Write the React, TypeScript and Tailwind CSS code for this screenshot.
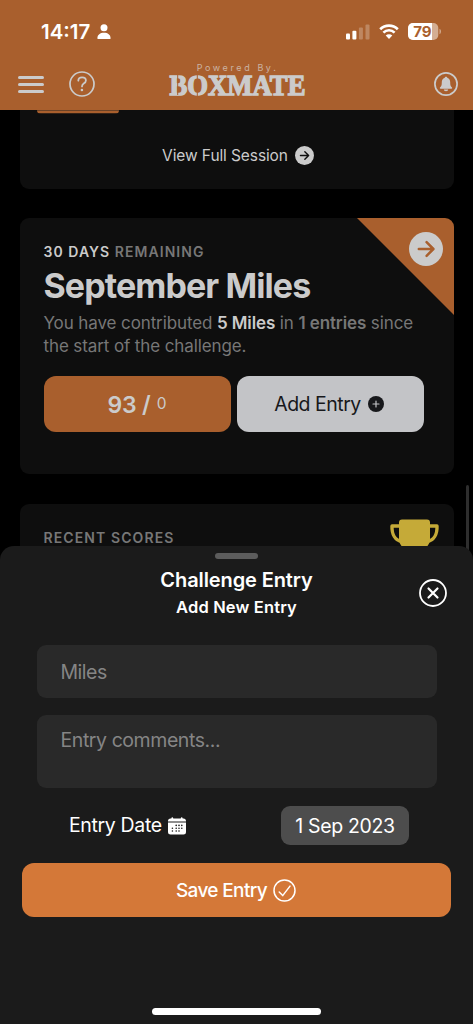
import type { ReactNode } from 'react';

function PersonIcon() {
  return (
    <svg width="14" height="16" viewBox="0 0 14 16" fill="#fff">
      <circle cx="7" cy="3.8" r="3.5" />
      <path d="M.4 14.2c0-3.4 2.8-5.4 6.6-5.4s6.6 2 6.6 5.4c0 .6-.4.9-1 .9H1.400c-.6 0-1-.3-1-.9z" />
    </svg>
  );
}

function SignalIcon() {
  return (
    <svg width="24" height="16" viewBox="0 0 24 16" fill="#fff">
      <rect x="0" y="9.500" width="4" height="6" rx="1" />
      <rect x="6.400" y="6.800" width="4" height="8.700" rx="1" />
      <rect x="12.900" y="3.600" width="4" height="11.900" rx="1" opacity=".25" />
      <rect x="19.500" y=".5" width="4" height="15" rx="1" opacity=".25" />
    </svg>
  );
}

function WifiIcon() {
  return (
    <svg width="20" height="15" viewBox="0 0 20 15" fill="none">
      <path d="M1.200 5.200a12.600 12.600 0 0 1 17.600 0" stroke="#fff" strokeWidth="2.700" />
      <path d="M4.400 8.600a8 8 0 0 1 11.200 0" stroke="#fff" strokeWidth="2.600" />
      <path d="M10 15l-3.300-3.400a4.700 4.700 0 0 1 6.600 0z" fill="#fff" />
    </svg>
  );
}

function BatteryIcon() {
  return (
    <svg width="34" height="17" viewBox="0 0 34 17">
      <clipPath id="battery">
        <rect width="30.300" height="17" rx="5" />
      </clipPath>
      <g clipPath="url(#battery)">
        <rect width="31" height="17" fill="#d4ae93" />
        <rect width="24" height="17" fill="#fff" />
      </g>
      <path d="M31.500 5.800c1.900.6 1.900 4.800 0 5.400z" fill="#d4ae93" />
      <text x="5.200" y="13.700" fontFamily="Inter, sans-serif" fontSize="14.500" fontWeight="700" textLength="18.500" lengthAdjust="spacingAndGlyphs" fill="#a95f2d">
        79
      </text>
    </svg>
  );
}

function HelpIcon() {
  return (
    <svg width="26" height="26" viewBox="0 0 26 26" fill="none" stroke="#cbcbcb" strokeLinecap="round">
      <circle cx="13" cy="13" r="12" strokeWidth="1.700" />
      <path d="M9.300 9.600c.1-2.100 1.600-3.300 3.800-3.300 2.200 0 3.800 1.200 3.800 3.100 0 1.500-.8 2.200-2.200 3.100-1.300.9-1.700 1.500-1.700 2.900" strokeWidth="1.800" />
      <circle cx="12.900" cy="19" r="1.300" fill="#cbcbcb" stroke="none" />
    </svg>
  );
}

function BellIcon() {
  return (
    <svg width="24" height="24" viewBox="0 0 24 24" fill="#cbcbcb">
      <circle cx="12" cy="12" r="11.100" fill="none" stroke="#cbcbcb" strokeWidth="1.700" />
      <path d="M12 4.700c-.8 0-1.200.5-1.300 1.100-2 .7-2.900 2.300-2.900 4.500 0 3-.4 3.800-1.600 5-.7.700-.4 1.500.4 1.500h10.800c.8 0 1.100-.8.400-1.500-1.200-1.200-1.600-2-1.600-5 0-2.200-.9-3.800-2.900-4.500-.1-.6-.5-1.100-1.300-1.100z" />
      <path d="M9.800 17.500a2.200 1.700 0 0 0 4.400 0z" />
    </svg>
  );
}

function Logo() {
  return (
    <svg className="overflow-visible" width="138" height="24" viewBox="0 0 138 24">
      <text x=".5" y="21.800" fontFamily="'Liberation Serif', serif" fontSize="30" fontWeight="700" textLength="136" lengthAdjust="spacingAndGlyphs" fill="#cbcbcb" stroke="#cbcbcb" strokeWidth="1.400">
        BOXMATE
      </text>
      {/* stencil bridges */}
      <path d="M8.700 1v21M28.300 0v23M92 15v9" stroke="#a95f2d" strokeWidth="1" />
    </svg>
  );
}

function ArrowCircle({ size, arrow }: { size: number; arrow: string }) {
  return (
    <svg width={size} height={size} viewBox="0 0 34 34" fill="none">
      <circle cx="17" cy="17" r="17" fill="#cbcbcb" />
      <path d="M9.800 17h14.400M17.600 10.200l6.800 6.800-6.800 6.800" stroke={arrow} strokeWidth="2.500" strokeLinecap="round" strokeLinejoin="round" />
    </svg>
  );
}

function PlusCircle() {
  return (
    <svg width="16" height="16" viewBox="0 0 16 16">
      <circle cx="8" cy="8" r="8" fill="#17181b" />
      <path d="M8 5v6M5 8h6" stroke="#c3c4c7" strokeWidth="1.200" strokeLinecap="round" />
    </svg>
  );
}

function TrophyIcon() {
  return (
    <svg width="49" height="44" viewBox="0 0 49 44" fill="none">
      <path d="M9.500 7H2c-.3 8 3 14.500 10 15.500M39.500 7H47c.3 8-3 14.500-10 15.500" stroke="#c5aa38" strokeWidth="3.400" strokeLinejoin="round" />
      <path d="M12 .5h25a3 3 0 0 1 3 3V20c0 6-5 12-15.500 12S9 26 9 20V3.500a3 3 0 0 1 3-3z" fill="#c5aa38" />
    </svg>
  );
}

function CloseIcon() {
  return (
    <svg width="28" height="28" viewBox="0 0 28 28" fill="none" stroke="#fff" strokeLinecap="round">
      <circle cx="14" cy="14" r="13" strokeWidth="1.800" />
      <path d="M9.500 9.500l9 9M18.500 9.500l-9 9" strokeWidth="2.200" />
    </svg>
  );
}

function CalendarIcon() {
  const dots = [
    [8.2, 8.4], [11, 8.4], [13.8, 8.4],
    [4.4, 11.2], [8.2, 11.2], [11, 11.2], [13.8, 11.2],
    [4.4, 14], [8.2, 14], [11, 14],
  ];
  return (
    <svg width="18" height="18" viewBox="0 0 18 18" fill="#fff">
      <path d="M0 4.400V4c0-1.500 1-2.500 2.500-2.500h.8C3.400.700 3.800.300 4.300.300s.9.400 1 1.200h7.400c.1-.8.500-1.200 1-1.200s.9.400 1 1.200h.8C17 1.500 18 2.500 18 4v.400z" />
      <path d="M0 5.500h18V15c0 1.700-1 2.500-2.500 2.500h-13C1 17.500 0 16.700 0 15z" />
      {dots.map(([x, y]) => (
        <circle key={`${x}-${y}`} cx={x} cy={y} r=".8" fill="#1b1b1b" />
      ))}
    </svg>
  );
}

function CheckIcon() {
  return (
    <svg width="23" height="23" viewBox="0 0 23 23" fill="none" stroke="#fff" strokeLinecap="round" strokeLinejoin="round">
      <circle cx="11.500" cy="11.500" r="10.500" strokeWidth="1.500" />
      <path d="M6.200 13l3.500 3.600 7.300-9.500" strokeWidth="1.500" />
    </svg>
  );
}

function Header() {
  return (
    <header className="h-[110px] bg-[#a95f2d]">
      <div className="flex h-[62px] items-center pt-px pr-[31px] pl-[41px]">
        <span className="w-[50px] pt-px text-[20.5px] font-semibold whitespace-nowrap text-white">14:17</span>
        <div className="ml-[6px]">
          <PersonIcon />
        </div>
        <div className="ml-auto flex items-center">
          <SignalIcon />
          <div className="ml-[9px]">
            <WifiIcon />
          </div>
          <div className="ml-[9px]">
            <BatteryIcon />
          </div>
        </div>
      </div>
      <div className="flex h-11 items-center justify-between pr-[15.5px] pl-[17.5px]">
        <div className="flex w-[140px] items-center">
          <div className="flex w-[26px] flex-col gap-1">
            <div className="h-[3px] rounded-full bg-[#cbcbcb]" />
            <div className="h-[3px] rounded-full bg-[#cbcbcb]" />
            <div className="h-[3px] rounded-full bg-[#cbcbcb]" />
          </div>
          <div className="ml-[25px]">
            <HelpIcon />
          </div>
        </div>
        <div className="flex flex-col items-center pb-[9px]">
          <span className="text-[9px] leading-[11px] tracking-[2.6px] whitespace-nowrap text-[#cbb3a3]">Powered By.</span>
          <Logo />
        </div>
        <div className="flex w-[140px] justify-end">
          <BellIcon />
        </div>
      </div>
    </header>
  );
}

function Card({ className, children }: { className: string; children: ReactNode }) {
  return <section className={`mx-[19.5px] overflow-hidden bg-[#0e0e0e] ${className}`}>{children}</section>;
}

function ChallengeCard() {
  return (
    <Card className="relative mt-[29px] h-[256px] rounded-[9px] px-6 pt-[23px]">
      <svg className="absolute top-0 right-0" width="97" height="97" viewBox="0 0 97 97">
        <path d="M0 0h97v97z" fill="#a95f2d" />
      </svg>
      <div className="absolute top-[14px] right-[11px]">
        <ArrowCircle size={34} arrow="#a95f2d" />
      </div>
      <p className="text-sm leading-[22px] font-semibold tracking-[1.05px] whitespace-nowrap text-[#777]">
        <span className="text-[#cbcbcb]">30 DAYS</span> REMAINING
      </p>
      <h1 className="mt-[2px] text-[34px] leading-[42px] font-bold tracking-[-0.9px] whitespace-nowrap text-[#cbcbcb]">September Miles</h1>
      <p className="mt-[5px] text-[17px] leading-[23px] tracking-[-0.11px] whitespace-nowrap text-[#777]">
        You have contributed <b className="font-semibold text-[#cbcbcb]">5 Miles</b> in <b className="font-semibold">1 entries</b> since
        <br />
        the start of the challenge.
      </p>
      <div className="mt-[18px] flex gap-[6px]">
        <div className="flex h-14 w-[187px] items-center justify-center rounded-xl bg-[#a95f2d] text-[#cbcbcb]">
          <span className="pt-[3px] text-[23px] font-semibold tracking-[-0.2px]">93 /</span>
          <span className="ml-[6px] text-[15.5px]">0</span>
        </div>
        <button className="flex h-14 w-[187px] items-center justify-center gap-[7px] rounded-xl bg-[#c3c4c7] pr-[2px] text-[19.5px] text-[#17181b]">
          <span className="pt-[2px] tracking-[-0.5px]">Add Entry</span>
          <PlusCircle />
        </button>
      </div>
    </Card>
  );
}

function EntrySheet() {
  return (
    <div className="absolute inset-x-0 top-[546px] bottom-0 flex flex-col rounded-t-[14px] bg-[#1b1b1b] text-white">
      <div className="mx-auto mt-[6.500px] h-[6px] w-[43px] rounded-full bg-[#5c5c5c]" />
      <div className="relative mt-[8.500px] text-center">
        <h2 className="text-xl leading-[26px] font-semibold tracking-[-0.1px]">Challenge Entry</h2>
        <h3 className="mt-px mb-px text-[16.5px] leading-[26px] font-semibold tracking-[0.15px]">Add New Entry</h3>
        <button className="absolute top-[12px] right-[26px]">
          <CloseIcon />
        </button>
      </div>
      <div className="mx-[36.500px] mt-[24px] flex flex-col gap-[17px]">
        <input className="h-[53px] rounded-[9px] bg-[#292929] px-6 text-[19.500px] tracking-[-0.5px] outline-none placeholder:text-[#858585]" placeholder="Miles" />
        <textarea className="h-[73px] resize-none rounded-[9px] bg-[#292929] px-6 pt-[11px] text-[19.500px] leading-7 tracking-[-0.43px] outline-none placeholder:text-[#858585]" placeholder="Entry comments..." />
      </div>
      <div className="mt-[18px] mr-16 ml-[69px] flex items-center justify-between">
        <div className="flex items-center gap-[6px] text-[19.500px] tracking-[-0.35px] whitespace-nowrap">
          Entry Date
          <CalendarIcon />
        </div>
        <div className="flex h-[39px] w-32 items-center justify-center rounded-[9px] bg-[#4d4d4d] pt-[2px] text-[19.500px] tracking-[-0.35px] whitespace-nowrap">1 Sep 2023</div>
      </div>
      <button className="mx-[22px] mt-[18px] flex h-[54px] items-center justify-center gap-[6px] rounded-xl bg-[#d47838] pr-px text-[19px] font-medium">
        <span className="pt-[3px] tracking-[-0.65px]">Save Entry</span>
        <CheckIcon />
      </button>
      <div className="mx-auto mt-auto mb-[9.500px] h-[6.500px] w-[169px] rounded-full bg-white" />
    </div>
  );
}

export default function App() {
  return (
    <div className="relative h-[1024px] w-[473px] overflow-hidden bg-black font-['Inter',sans-serif]">
      <Header />
      <Card className="h-[79px] rounded-b-[9px]">
        <div className="ml-[17.500px] h-[3.500px] w-[82px] rounded-b-[10px] border-t border-[#6b4226] bg-[#a95f2d]" />
        <div className="mt-[31px] flex items-center justify-center gap-[7px] pl-[3px] text-[15.500px] leading-[22px] tracking-[-0.1px] whitespace-nowrap text-[#cbcbcb]">
          View Full Session
          <ArrowCircle size={19} arrow="#0e0e0e" />
        </div>
      </Card>
      <ChallengeCard />
      <Card className="mt-[29.500px] flex h-[100px] justify-between rounded-[9px] pt-[15px] pr-[15px] pl-6">
        <h4 className="mt-2 text-sm leading-[22px] font-semibold tracking-[1.1px] whitespace-nowrap text-[#777]">RECENT SCORES</h4>
        <TrophyIcon />
      </Card>
      <div className="absolute top-[485px] right-[4px] h-20 w-[3px] rounded-full bg-[#2e2e2e]" />
      <EntrySheet />
    </div>
  );
}
